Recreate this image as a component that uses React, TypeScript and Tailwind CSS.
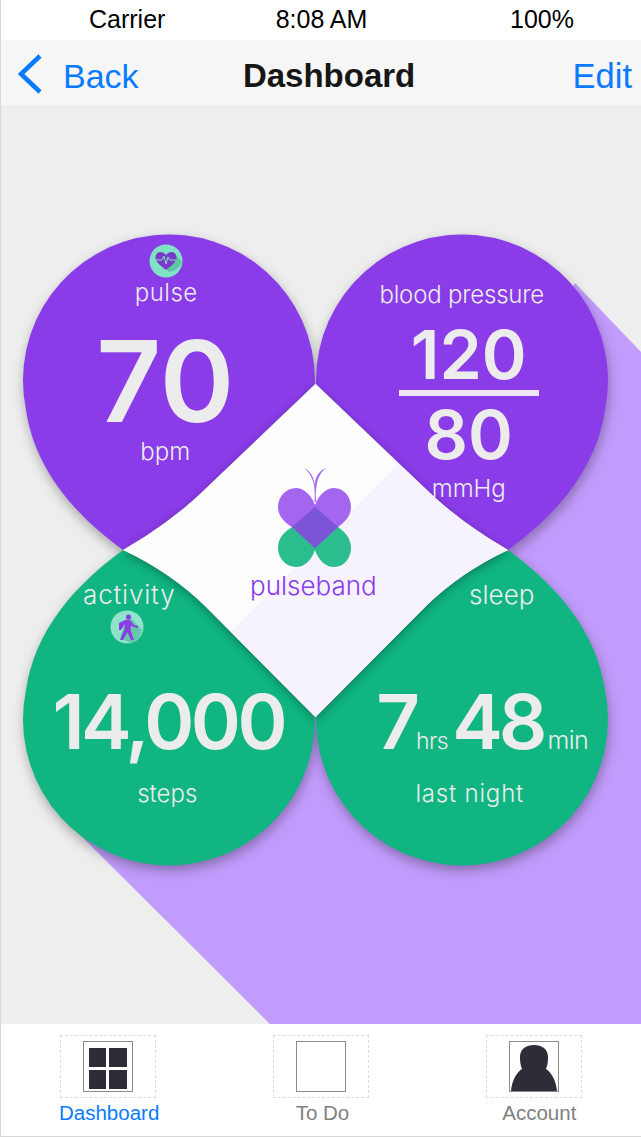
const WHITE = "text-[#ececec]";

function Field() {
  return (
    <svg viewBox="1 105 640 919" className="absolute inset-0 w-[640px] h-[919px]">
      <path d="M575 283 L641 352 V1024 H270 L50 805 L169 720 L316 717 Z" fill="#c29cfc" />
      <g className="drop-shadow-[1px_5px_6px_rgba(0,0,0,0.3)]">
        <path d="M26 410 A146 146 0 1 1 315 380 L315 384 L200 494 Q168 524 123 550 C75 515 35 470 26 410 Z" fill="#8a3ce8" />
        <path d="M605 410 A146 146 0 1 0 316 380 L316 384 L431 494 Q463 524 508 550 C556 515 596 470 605 410 Z" fill="#8a3ce8" />
        <path d="M26 690 A146 146 0 1 0 315 720 L315 717 L205 606 Q170 572 123 550 C75 585 35 630 26 690 Z" fill="#10b582" />
        <path d="M605 690 A146 146 0 1 1 316 720 L316 717 L426 606 Q461 572 508 550 C556 585 596 630 605 690 Z" fill="#10b582" />
      </g>
      <g className="drop-shadow-[0_3px_5px_rgba(0,0,0,0.3)]">
        <path d="M315.5 384 L431 494 Q463 524 508 550 Q461 572 426 606 L315.5 717 L205 606 Q170 572 123 550 Q168 524 200 494 Z" fill="#fdfdfd" />
      </g>
      <path d="M399 464 L431 494 Q463 524 508 550 Q461 572 426 606 L315.5 717 L231 632 Z" fill="#f6f2fe" />
      <path d="M292 527 C284 532 278 538 278 548 C278 558 286 567 296 567 C304 567 311 561 315 550 C319 561 326 567 334 567 C344 567 351 558 351 548 C351 538 345 532 338 527 L315 507Z" fill="#2bbd8e" />
      <path d="M315 505 C311 494 303 488 296 488 C286 488 278 497 278 507 C278 516 284 522 292 527 L315 548 L338 527 C345 522 351 516 351 507 C351 497 344 488 334 488 C327 488 319 494 315 505Z" fill="#a566ef" />
      <path d="M315 507 L338 527 L315 548 L292 527 Z" fill="#7b55d6" />
      <path d="M304 468 C312 474 316 484 314.500 502 L316 502 C315 484 318 474 326 468 C316 472 314 482 315 490 C315 482 313 472 304 468Z" fill="#a566ef" />
    </svg>
  );
}

function HeartBadge() {
  return (
    <svg viewBox="0 0 34 34" className="w-[34px] h-[34px]">
      <circle cx="17" cy="17" r="16.500" fill="#80e3c6" />
      <path d="M9 14 L20 28 A16.500 16.500 0 0 0 33 18 L26 10 Z" fill="#5fc5a5" />
      <path d="M17 26 C12 22 6.500 18 6.500 13.500 C6.500 10 9 8 11.500 8 C14 8 16 9.500 17 11 C18 9.500 20 8 22.500 8 C25 8 27.500 10 27.500 13.500 C27.500 18 22 22 17 26Z" fill="#7a3bc9" />
      <path d="M7 16 H13 L15 12 L17 20 L19 13 L20.500 16 H27" fill="none" stroke="#80e3c6" strokeWidth="1" />
    </svg>
  );
}

function WalkerBadge() {
  return (
    <svg viewBox="0 0 34 34" className="w-[34px] h-[34px]">
      <circle cx="17" cy="17" r="16.500" fill="#8fe3c9" />
      <path d="M18 5 L32 20 A16.500 16.500 0 0 1 21 33 L10 28 Z" fill="#66c8aa" />
      <circle cx="18.500" cy="7" r="2.600" fill="#8a3ce8" />
      <path d="M15 10 H20 L24 15 L28 16 V18 L23 17 L21 15 L20.500 20 L24 30 H21 L17.500 22 L13 30 H10 L14.500 19 L15 14 L11 20 H9 V13 Z" fill="#8a3ce8" />
    </svg>
  );
}

function TabBox({ children }: { children?: React.ReactNode }) {
  return (
    <div className="w-[96px] h-[63px] border border-dashed border-[#dddddd] flex items-start justify-center pt-[5px]">
      <div className="w-[50px] h-[51px] border border-[#8a8a8a] bg-white overflow-hidden">{children}</div>
    </div>
  );
}

export default function App() {
  return (
    <div className="w-[641px] h-[1137px] flex flex-col border-l border-b border-[#d8d8d8] bg-white font-['Liberation_Sans',sans-serif]">
      <div className="h-10 shrink-0 bg-white relative flex items-center justify-center text-[25px] text-black">
        <span className="absolute left-[88px]">Carrier</span>
        <span className="whitespace-nowrap ml-[1px]">8:08 AM</span>
        <span className="absolute right-[67px]">100%</span>
      </div>

      <div className="h-[65px] shrink-0 bg-[#f6f6f6] flex items-start justify-between text-[#0a7bff] pr-[9px]">
        <div className="flex items-start pl-[16px]">
          <svg viewBox="0 0 26 40" className="w-[26px] h-[40px] mt-[14px]">
            <path d="M23 2 L4 20 L23 38" fill="none" stroke="#0a7bff" strokeWidth="4.500" />
          </svg>
          <span className="ml-[20px] mt-[14px] leading-[44px] text-[34px]">Back</span>
        </div>
        <span className="mt-[14px] leading-[44px] font-bold text-[#161616] text-[33px] ml-[-53px]">Dashboard</span>
        <span className="mt-[14px] leading-[44px] text-[34.500px]">Edit</span>
      </div>

      <div className="relative flex-1 bg-[#eeeeee] overflow-hidden">
        <Field />
        <div className={`relative grid grid-cols-2 w-[585px] ml-[22px] mt-[129px] font-['Inter',sans-serif] ${WHITE}`}>
          <div className="h-[316px] flex flex-col items-center">
            <div className="mt-[10px] -ml-[6px]"><HeartBadge /></div>
            <div className="text-[24px] leading-[30px] font-light -ml-[6px] tracking-[0.5px]">pulse</div>
            <div className="text-[113px] leading-[110px] font-semibold mt-[18px] -ml-[8px]">70</div>
            <div className="text-[24px] leading-[30px] font-light mt-[1px] -ml-[8px]">bpm</div>
          </div>
          <div className="h-[316px] flex flex-col items-center">
            <div className="text-[24px] leading-[30px] font-light mt-[46px] whitespace-nowrap -tracking-[0.2px]">blood pressure</div>
            <div className="ml-[14px] flex flex-col items-center">
              <div className="text-[68px] leading-[66px] font-semibold mt-[11px]">120</div>
              <div className="w-[140px] h-[6px] bg-[#efe6fb] mt-[3px]" />
              <div className="text-[68px] leading-[66px] font-semibold mt-[5px]">80</div>
              <div className="text-[24px] leading-[30px] font-light mt-[7px]">mmHg</div>
            </div>
          </div>
          <div className="h-[316px] flex flex-col items-center">
            <div className="text-[26px] leading-[30px] font-light mt-[30px] -ml-[80px] tracking-[0.8px]">activity</div>
            <div className="mt-[0px] -ml-[84px]"><WalkerBadge /></div>
            <div className="text-[76px] leading-[80px] font-semibold mt-[37px] -ml-[2px] whitespace-nowrap -tracking-[3.500px]">14,000</div>
            <div className="text-[24px] leading-[30px] font-light mt-[18px] -ml-[4px]">steps</div>
          </div>
          <div className="h-[316px] flex flex-col items-center">
            <div className="text-[26px] leading-[30px] font-light mt-[30px] ml-[80px]">sleep</div>
            <div className="flex items-baseline mt-[71px] ml-[41px] whitespace-nowrap">
              <span className="text-[76px] leading-[80px] font-semibold">7</span>
              <span className="text-[23px] font-light ml-[-4px] -tracking-[0.5px]">hrs</span>
              <span className="text-[76px] leading-[80px] font-semibold ml-[4px] -tracking-[4px]">48</span>
              <span className="text-[25px] font-light ml-[4px] -tracking-[0.5px]">min</span>
            </div>
            <div className="text-[24px] leading-[30px] font-light mt-[18px] ml-[16px] tracking-[0.8px]">last night</div>
          </div>
        </div>
        <div className="absolute left-[249px] top-[463px] font-['Inter',sans-serif] font-light text-[26px] leading-[36px] text-[#8a3ce8]">pulseband</div>
      </div>

      <div className="h-[112px] shrink-0 bg-white grid grid-cols-3 pt-[11px] text-[20.500px]">
        <div className="flex flex-col items-center">
          <TabBox>
            <div className="grid grid-cols-2 gap-[3px] px-[5px] pt-[6px]">
              <div className="h-[19px] bg-[#2d2d38]" />
              <div className="h-[19px] bg-[#2d2d38]" />
              <div className="h-[19px] bg-[#2d2d38]" />
              <div className="h-[19px] bg-[#2d2d38]" />
            </div>
          </TabBox>
          <span className="text-[#0a7bff] ml-[3px]">Dashboard</span>
        </div>
        <div className="flex flex-col items-center">
          <TabBox />
          <span className="text-[#808080] ml-[3px]">To Do</span>
        </div>
        <div className="flex flex-col items-center">
          <TabBox>
            <svg viewBox="0 0 48 49" className="w-[48px] h-[49px]">
              <path d="M1 49 C2 38 7 30 12 27 C10 22 10 18 10 15 C10 7 16 3 24 3 C32 3 38 7 38 15 C38 18 38 22 36 27 C41 30 46 38 47 49 Z" fill="#2d2d38" />
            </svg>
          </TabBox>
          <span className="text-[#808080] ml-[10px]">Account</span>
        </div>
      </div>
    </div>
  );
}
